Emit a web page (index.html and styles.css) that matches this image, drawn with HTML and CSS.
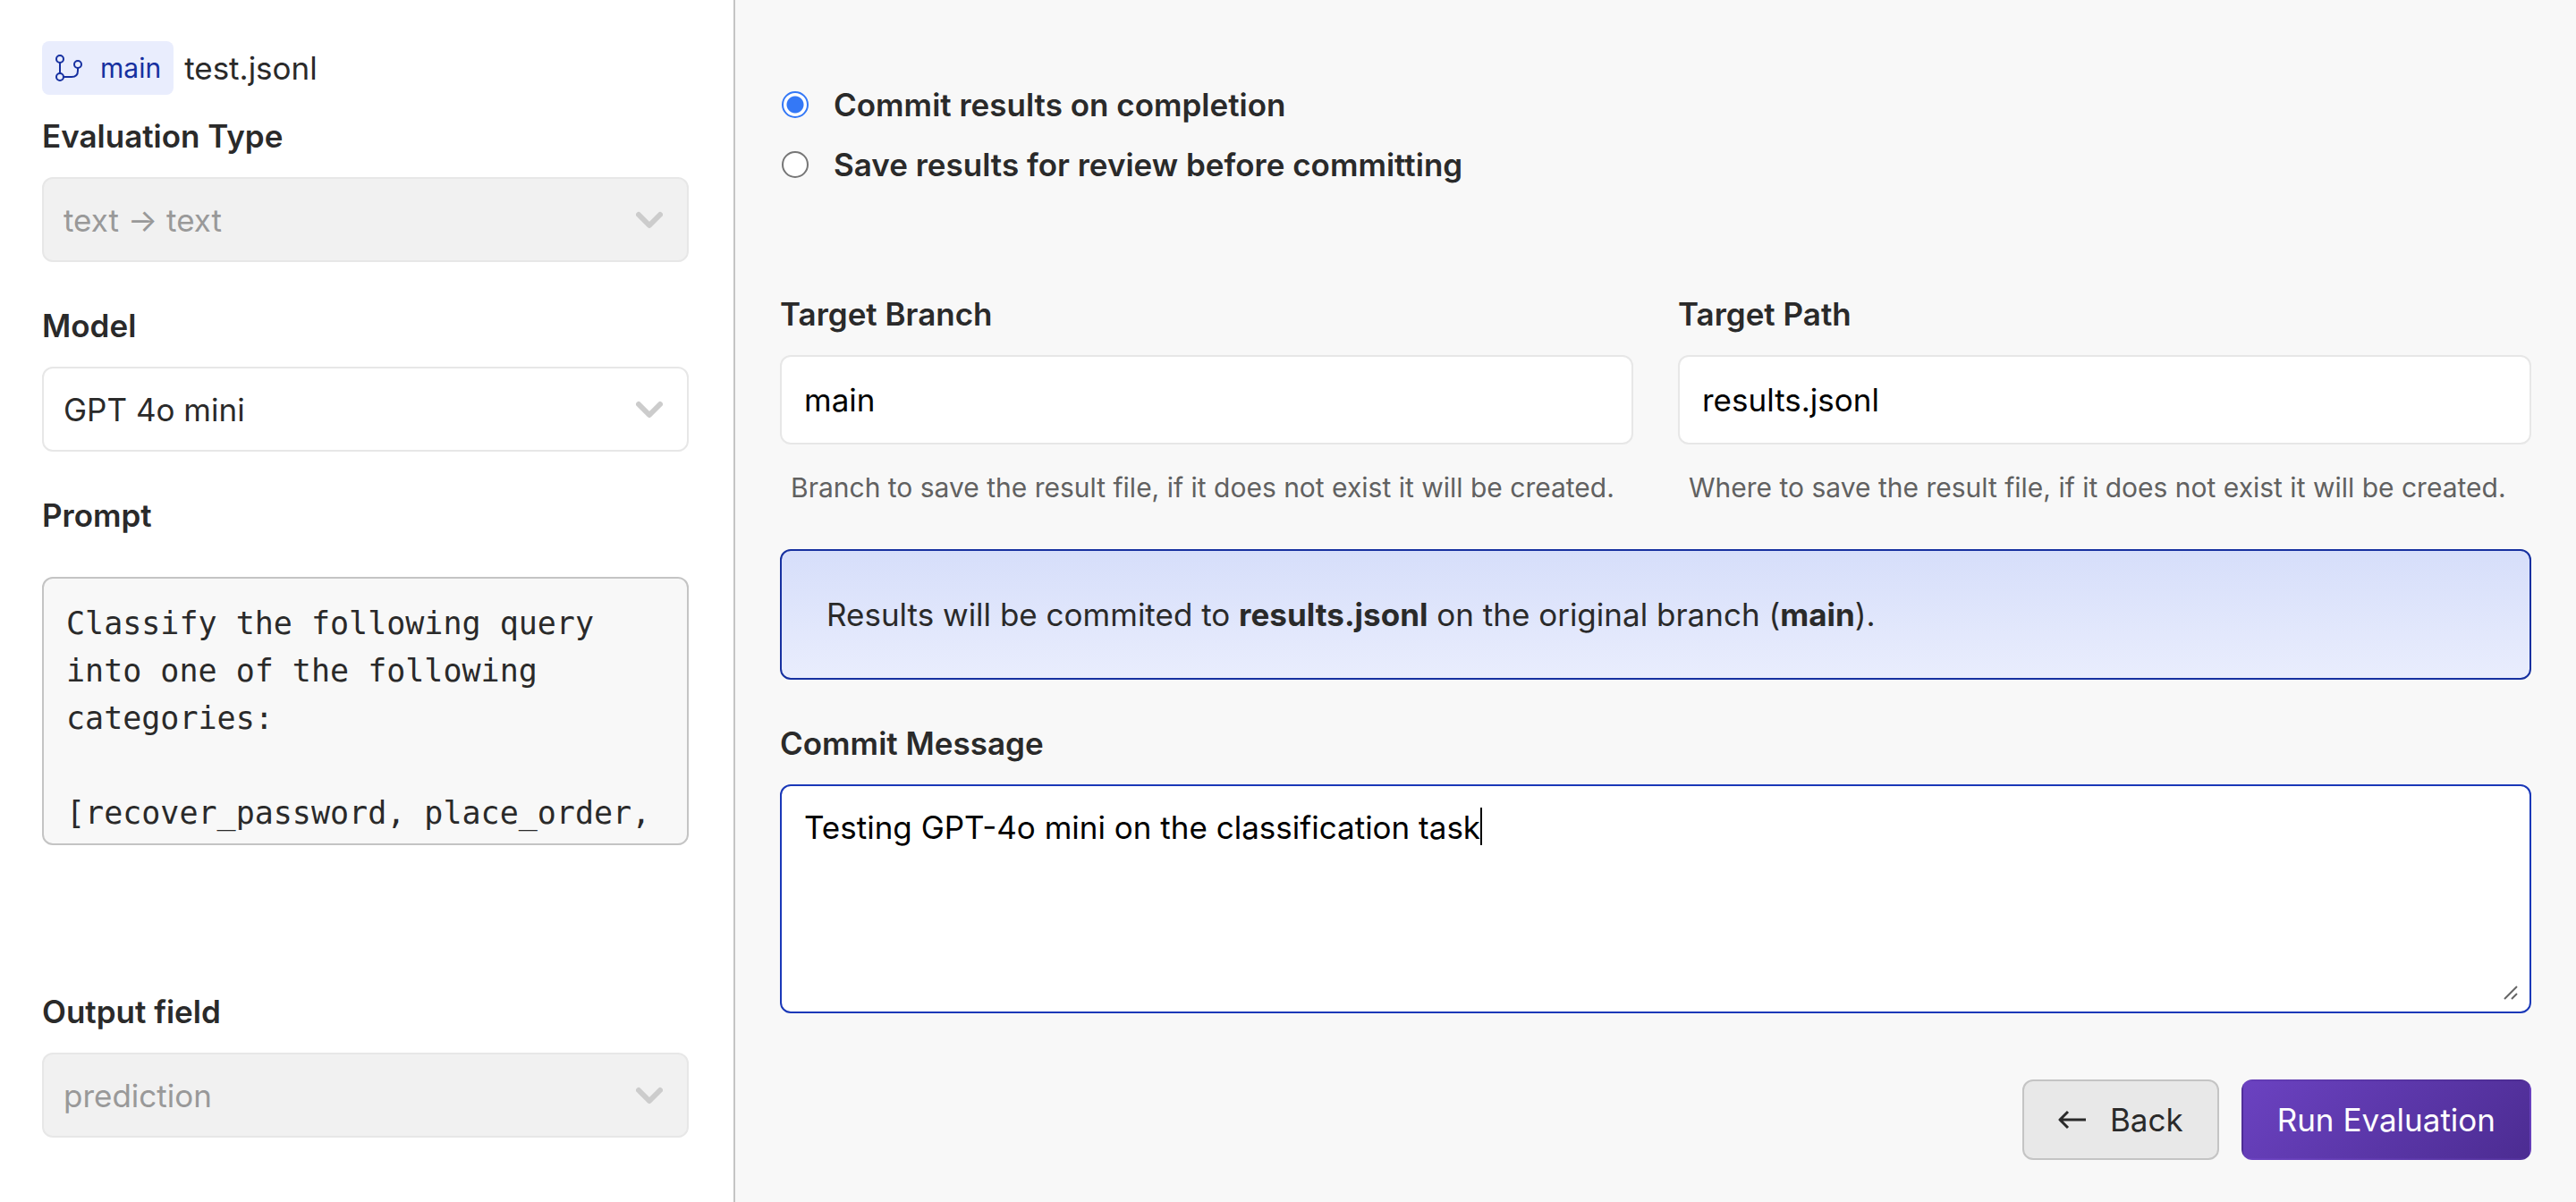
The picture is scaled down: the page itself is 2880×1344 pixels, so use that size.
FILE: index.html
```html
<!DOCTYPE html>
<html lang="en">
<head>
  <meta charset="utf-8">
  <meta name="viewport" content="width=device-width, initial-scale=1">
  <title>Run Evaluation</title>
  <link rel="stylesheet" href="styles.css">
</head>
<body>
  <form class="page">
    <aside class="sidebar">
      <div class="source">
        <a class="branch" href="#main">
          <svg class="branch-icon" viewBox="0 0 30 30" fill="none" stroke="currentColor" stroke-width="2" aria-hidden="true">
            <circle cx="5" cy="5" r="4"/>
            <circle cx="25" cy="11" r="4"/>
            <circle cx="5" cy="25" r="4"/>
            <path d="M5 9v12M9 25h9q7 0 7-7v-3"/>
          </svg>
          main
        </a>
        <span class="file">test.jsonl</span>
      </div>

      <div class="field">
        <label class="label" for="type">Evaluation Type</label>
        <div class="select">
          <select id="type" class="select-box" disabled><option>text → text</option></select>
          <svg class="chevron" viewBox="0 0 30 20" aria-hidden="true"><path d="M3 4l12 12L27 4"/></svg>
        </div>
      </div>

      <div class="field">
        <label class="label" for="model">Model</label>
        <div class="select">
          <select id="model" class="select-box"><option>GPT 4o mini</option></select>
          <svg class="chevron" viewBox="0 0 30 20" aria-hidden="true"><path d="M3 4l12 12L27 4"/></svg>
        </div>
      </div>

      <div class="field field-prompt">
        <label class="label" for="prompt">Prompt</label>
        <textarea id="prompt" class="prompt" readonly>Classify the following query into one of the following categories:

[recover_password, place_order,</textarea>
      </div>

      <div class="field">
        <label class="label" for="output">Output field</label>
        <div class="select">
          <select id="output" class="select-box" disabled><option>prediction</option></select>
          <svg class="chevron" viewBox="0 0 30 20" aria-hidden="true"><path d="M3 4l12 12L27 4"/></svg>
        </div>
      </div>
    </aside>

    <main class="main">
      <div class="choices">
        <label class="choice"><input class="radio" type="radio" name="mode" checked>Commit results on completion</label>
        <label class="choice"><input class="radio" type="radio" name="mode">Save results for review before committing</label>
      </div>

      <div class="targets">
        <div class="field">
          <label class="label" for="branch">Target Branch</label>
          <input id="branch" class="input" type="text" value="main">
          <p class="hint">Branch to save the result file, if it does not exist it will be created.</p>
        </div>
        <div class="field">
          <label class="label" for="path">Target Path</label>
          <input id="path" class="input" type="text" value="results.jsonl">
          <p class="hint">Where to save the result file, if it does not exist it will be created.</p>
        </div>
      </div>

      <p class="notice">Results will be commited to <strong>results.jsonl</strong> on the original branch (<strong>main</strong>).</p>

      <div class="field">
        <label class="label" for="message">Commit Message</label>
        <div class="message">
          <textarea id="message" class="message-box">Testing GPT-4o mini on the classification task</textarea>
          <span class="caret"></span>
          <svg class="grip" viewBox="0 0 16 16" aria-hidden="true"><path d="M1 15L15 1M9 15l6-6"/></svg>
        </div>
      </div>

      <div class="actions">
        <button class="button" type="button">
          <svg class="arrow" viewBox="0 0 32 30" aria-hidden="true"><path d="M31 15H2M11 6L2 15l9 9"/></svg>
          Back
        </button>
        <button class="button button-primary" type="submit">Run Evaluation</button>
      </div>
    </main>
  </form>
</body>
</html>
```

FILE: styles.css
```css
* {
  box-sizing: border-box;
}

body {
  margin: 0;
  background: #f8f8f8;
  color: #2a2a2a;
  font-family: Inter, "Liberation Sans", sans-serif;
  font-size: 35px;
  line-height: 44px;
}

.page {
  display: grid;
  grid-template-columns: 822px 1fr;
  min-height: 100vh;
}

.sidebar {
  display: flex;
  flex-direction: column;
  gap: 49px;
  padding: 46px 50px 46px 47px;
  border-right: 2px solid #c4c4c4;
  background: #fff;
}

.source {
  display: flex;
  align-items: center;
  gap: 12px;
  margin-bottom: -25px;
}

.branch {
  display: flex;
  align-items: center;
  gap: 20px;
  height: 60px;
  padding: 0 14px 0 15px;
  border-radius: 8px;
  background: #e9edfd;
  color: #1630a0;
  font-size: 30px;
  text-decoration: none;
}

.branch-icon {
  width: 30px;
  height: 30px;
}

.field {
  display: flex;
  flex-direction: column;
  gap: 24px;
}

.field-prompt {
  gap: 47px;
  margin-bottom: 115px;
}

.label {
  font-weight: 600;
}

.select {
  display: grid;
  align-items: center;
}

.select > * {
  grid-area: 1 / 1;
}

.select-box {
  width: 100%;
  height: 95px;
  padding: 0 72px 0 22px;
  border: 2px solid #e7e7e7;
  border-radius: 12px;
  appearance: none;
  background: #fff;
  color: #2a2a2a;
  font: inherit;
}

.select-box:disabled {
  background: #f1f1f1;
  color: #999;
  opacity: 1;
}

.chevron {
  justify-self: end;
  width: 30px;
  height: 20px;
  margin-right: 29px;
  fill: none;
  stroke: #ccc;
  stroke-width: 6;
  stroke-linecap: round;
  stroke-linejoin: round;
  pointer-events: none;
}

.prompt {
  width: 100%;
  height: 300px;
  padding: 24px 25px;
  border: 2px solid #c4c4c4;
  border-radius: 12px;
  background: #f8f8f8;
  color: #2a2a2a;
  font: 35px/53px "DejaVu Sans Mono", monospace;
  overflow: hidden;
  resize: none;
}

.main {
  display: flex;
  flex-direction: column;
  padding: 95px 50px 47px;
}

.choices {
  display: flex;
  flex-direction: column;
  gap: 23px;
  margin-bottom: 123px;
}

.choice {
  display: flex;
  align-items: center;
  gap: 28px;
  padding-left: 2px;
  font-weight: 600;
}

.radio {
  flex: none;
  width: 30px;
  height: 30px;
  margin: 0;
  border: 2px solid #767676;
  border-radius: 50%;
  appearance: none;
  background: #fff;
}

.radio:checked {
  border-color: #3478f6;
  background: radial-gradient(circle, #3478f6 9px, #fff 10px);
}

.targets {
  display: grid;
  grid-template-columns: 1fr 1fr;
  gap: 50px;
  margin-bottom: 49px;
}

.input,
.message-box {
  width: 100%;
  padding: 24px 25px;
  border: 2px solid #e7e7e7;
  border-radius: 12px;
  background: #fff;
  color: #000;
  font: inherit;
}

.input {
  height: 100px;
}

.hint {
  margin: 4px 12px 0;
  color: #616161;
  font-size: 30px;
  line-height: 40px;
}

.notice {
  margin: 0 0 49px;
  padding: 49px 50px;
  border: 2px solid #1630a0;
  border-radius: 12px;
  background: linear-gradient(#d6defa, #e9edfd);
}

.message {
  position: relative;
  display: grid;
}

.message-box {
  height: 256px;
  border-color: #1a38b8;
  outline: none;
  resize: none;
}

.caret {
  position: absolute;
  top: 26px;
  left: 783px;
  width: 2px;
  height: 42px;
  background: #000;
}

.grip {
  position: absolute;
  right: 15px;
  bottom: 15px;
  width: 16px;
  height: 16px;
  fill: none;
  stroke: #666;
  stroke-width: 2;
}

.actions {
  display: flex;
  justify-content: flex-end;
  gap: 25px;
  margin-top: 74px;
}

.button {
  display: flex;
  align-items: center;
  gap: 26px;
  height: 90px;
  padding: 0 38px;
  border: 2px solid #c4c4c4;
  border-radius: 12px;
  background: #e8e8e8;
  color: #2a2a2a;
  font: inherit;
}

.button-primary {
  border-color: transparent;
  background: linear-gradient(135deg, #6b42c1, #4c2c92);
  color: #fff;
}

.arrow {
  width: 32px;
  height: 30px;
  fill: none;
  stroke: currentColor;
  stroke-width: 3;
  stroke-linejoin: round;
}
```
